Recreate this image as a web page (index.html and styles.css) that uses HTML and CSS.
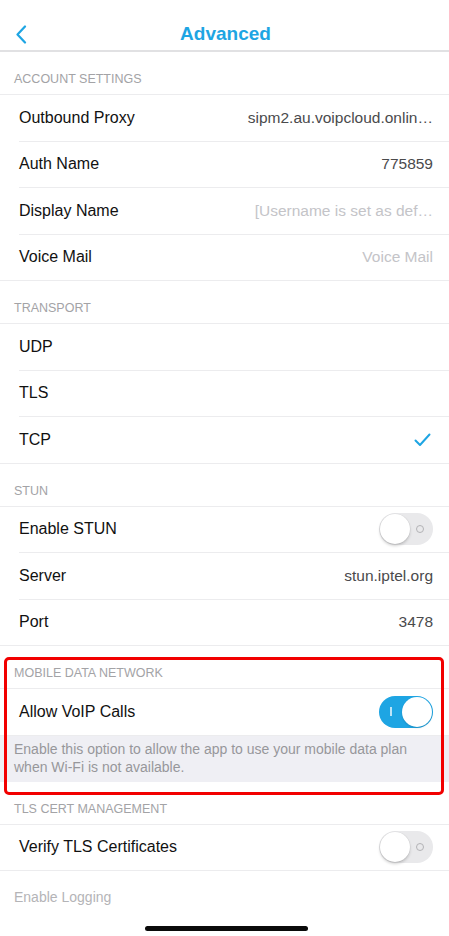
FILE: index.html
```html
<!DOCTYPE html>
<html lang="en">
<head>
    <meta charset="UTF-8">
    <meta name="viewport" content="width=device-width, initial-scale=1.0">
    <title>Advanced</title>
    <link rel="stylesheet" href="styles.css">
</head>
<body>
    <div class="nav">
        <a class="back" href="#">
            <svg width="12" height="19" viewBox="0 0 12 19"><polyline points="10,1.5 2.5,9.5 10,17.5" fill="none" stroke="#1ea5e3" stroke-width="2.2" stroke-linecap="round" stroke-linejoin="round"/></svg>
        </a>
        <div class="title">Advanced</div>
    </div>

    <div class="section-title">ACCOUNT SETTINGS</div>
    <div class="group">
        <div class="row"><span class="label">Outbound Proxy</span><span class="value">sipm2.au.voipcloud.onlin…</span></div>
        <div class="row"><span class="label">Auth Name</span><span class="value">775859</span></div>
        <div class="row"><span class="label">Display Name</span><span class="value placeholder">[Username is set as def…</span></div>
        <div class="row"><span class="label">Voice Mail</span><span class="value placeholder">Voice Mail</span></div>
    </div>

    <div class="section-title">TRANSPORT</div>
    <div class="group">
        <div class="row"><span class="label">UDP</span></div>
        <div class="row"><span class="label">TLS</span></div>
        <div class="row"><span class="label">TCP</span>
            <svg class="check" width="17" height="14" viewBox="0 0 17 14"><polyline points="1.5,7.5 6,12 15.5,1.5" fill="none" stroke="#1ea5e3" stroke-width="2" stroke-linecap="round" stroke-linejoin="round"/></svg>
        </div>
    </div>

    <div class="section-title">STUN</div>
    <div class="group">
        <div class="row"><span class="label">Enable STUN</span><span class="switch"><span class="mark"></span><span class="knob"></span></span></div>
        <div class="row"><span class="label">Server</span><span class="value">stun.iptel.org</span></div>
        <div class="row"><span class="label">Port</span><span class="value">3478</span></div>
    </div>

    <div class="highlight">
        <div class="section-title">MOBILE DATA NETWORK</div>
        <div class="group">
            <div class="row"><span class="label">Allow VoIP Calls</span><span class="switch on"><span class="mark"></span><span class="knob"></span></span></div>
        </div>
        <div class="section-footer">Enable this option to allow the app to use your mobile data plan when Wi-Fi is not available.</div>
    </div>

    <div class="section-title">TLS CERT MANAGEMENT</div>
    <div class="group">
        <div class="row"><span class="label">Verify TLS Certificates</span><span class="switch"><span class="mark"></span><span class="knob"></span></span></div>
    </div>

    <div class="section-title plain">Enable Logging</div>

    <div class="home-bar"></div>
</body>
</html>
```

FILE: styles.css
```css
body {
    margin: 0;
    background: #fff;
    font-family: "Liberation Sans", Arial, sans-serif;
    color: #111;
    overflow: hidden;
}
.nav {
    height: 32px;
    padding-top: 18px;
    border-bottom: 2px solid #e1e1e3;
    display: flex;
    align-items: center;
    justify-content: center;
    position: relative;
}
.back {
    position: absolute;
    left: 15px;
    top: 25px;
    display: block;
    width: 12px;
    height: 19px;
}
.back svg {
    display: block;
}
.title {
    color: #1ea5e3;
    font-weight: bold;
    font-size: 19px;
    margin-left: 2px;
}
.section-title {
    height: 42px;
    box-sizing: border-box;
    padding: 0 14px 8px;
    display: flex;
    align-items: flex-end;
    font-size: 12.5px;
    color: #a3a3a6;
}
.section-title.plain {
    font-size: 14px;
    color: #b4b4b7;
    padding-bottom: 8px;
}
.group {
    border-top: 1px solid #ececee;
    border-bottom: 1px solid #ececee;
}
.row {
    height: 45.5px;
    margin-left: 19px;
    padding-right: 16px;
    display: flex;
    align-items: center;
    justify-content: space-between;
    border-bottom: 1px solid #ececee;
    font-size: 16px;
}
.row:last-child {
    border-bottom: none;
}
.value {
    color: #4a4a4c;
    font-size: 15.5px;
}
.value.placeholder {
    color: #c4c4c8;
}
.check {
    margin-right: 2px;
}
.switch {
    width: 54px;
    height: 32px;
    border-radius: 16px;
    background: #e9e9eb;
    position: relative;
    flex-shrink: 0;
}
.switch .knob {
    position: absolute;
    top: 1px;
    left: 1px;
    width: 30px;
    height: 30px;
    border-radius: 50%;
    background: #fff;
    box-shadow: 0 2px 3px rgba(0,0,0,0.18), 0 0 0 0.5px rgba(0,0,0,0.06);
}
.switch .mark {
    position: absolute;
    top: 11.5px;
    right: 9px;
    width: 6px;
    height: 6px;
    border: 1.5px solid #b3b3b6;
    border-radius: 50%;
}
.switch.on {
    background: #1ea5e3;
}
.switch.on .knob {
    left: 23px;
    box-shadow: 0 1px 2px rgba(0,0,0,0.15);
}
.switch.on .mark {
    top: 11.5px;
    left: 11px;
    right: auto;
    width: 1.5px;
    height: 9px;
    border: none;
    border-radius: 0;
    background: rgba(255,255,255,0.7);
}
.section-footer {
    background: #efeff4;
    padding: 4px 14px 6px;
    font-size: 14px;
    line-height: 18px;
    color: #97979b;
}
.highlight {
    position: relative;
}
.highlight::after {
    content: "";
    position: absolute;
    top: 11px;
    left: 4px;
    right: 5px;
    bottom: -13px;
    border: 3px solid #f20000;
    border-radius: 5px;
    pointer-events: none;
}
.home-bar {
    position: fixed;
    left: 145px;
    bottom: 5px;
    width: 163px;
    height: 5px;
    border-radius: 3px;
    background: #0a0a0a;
}
```
